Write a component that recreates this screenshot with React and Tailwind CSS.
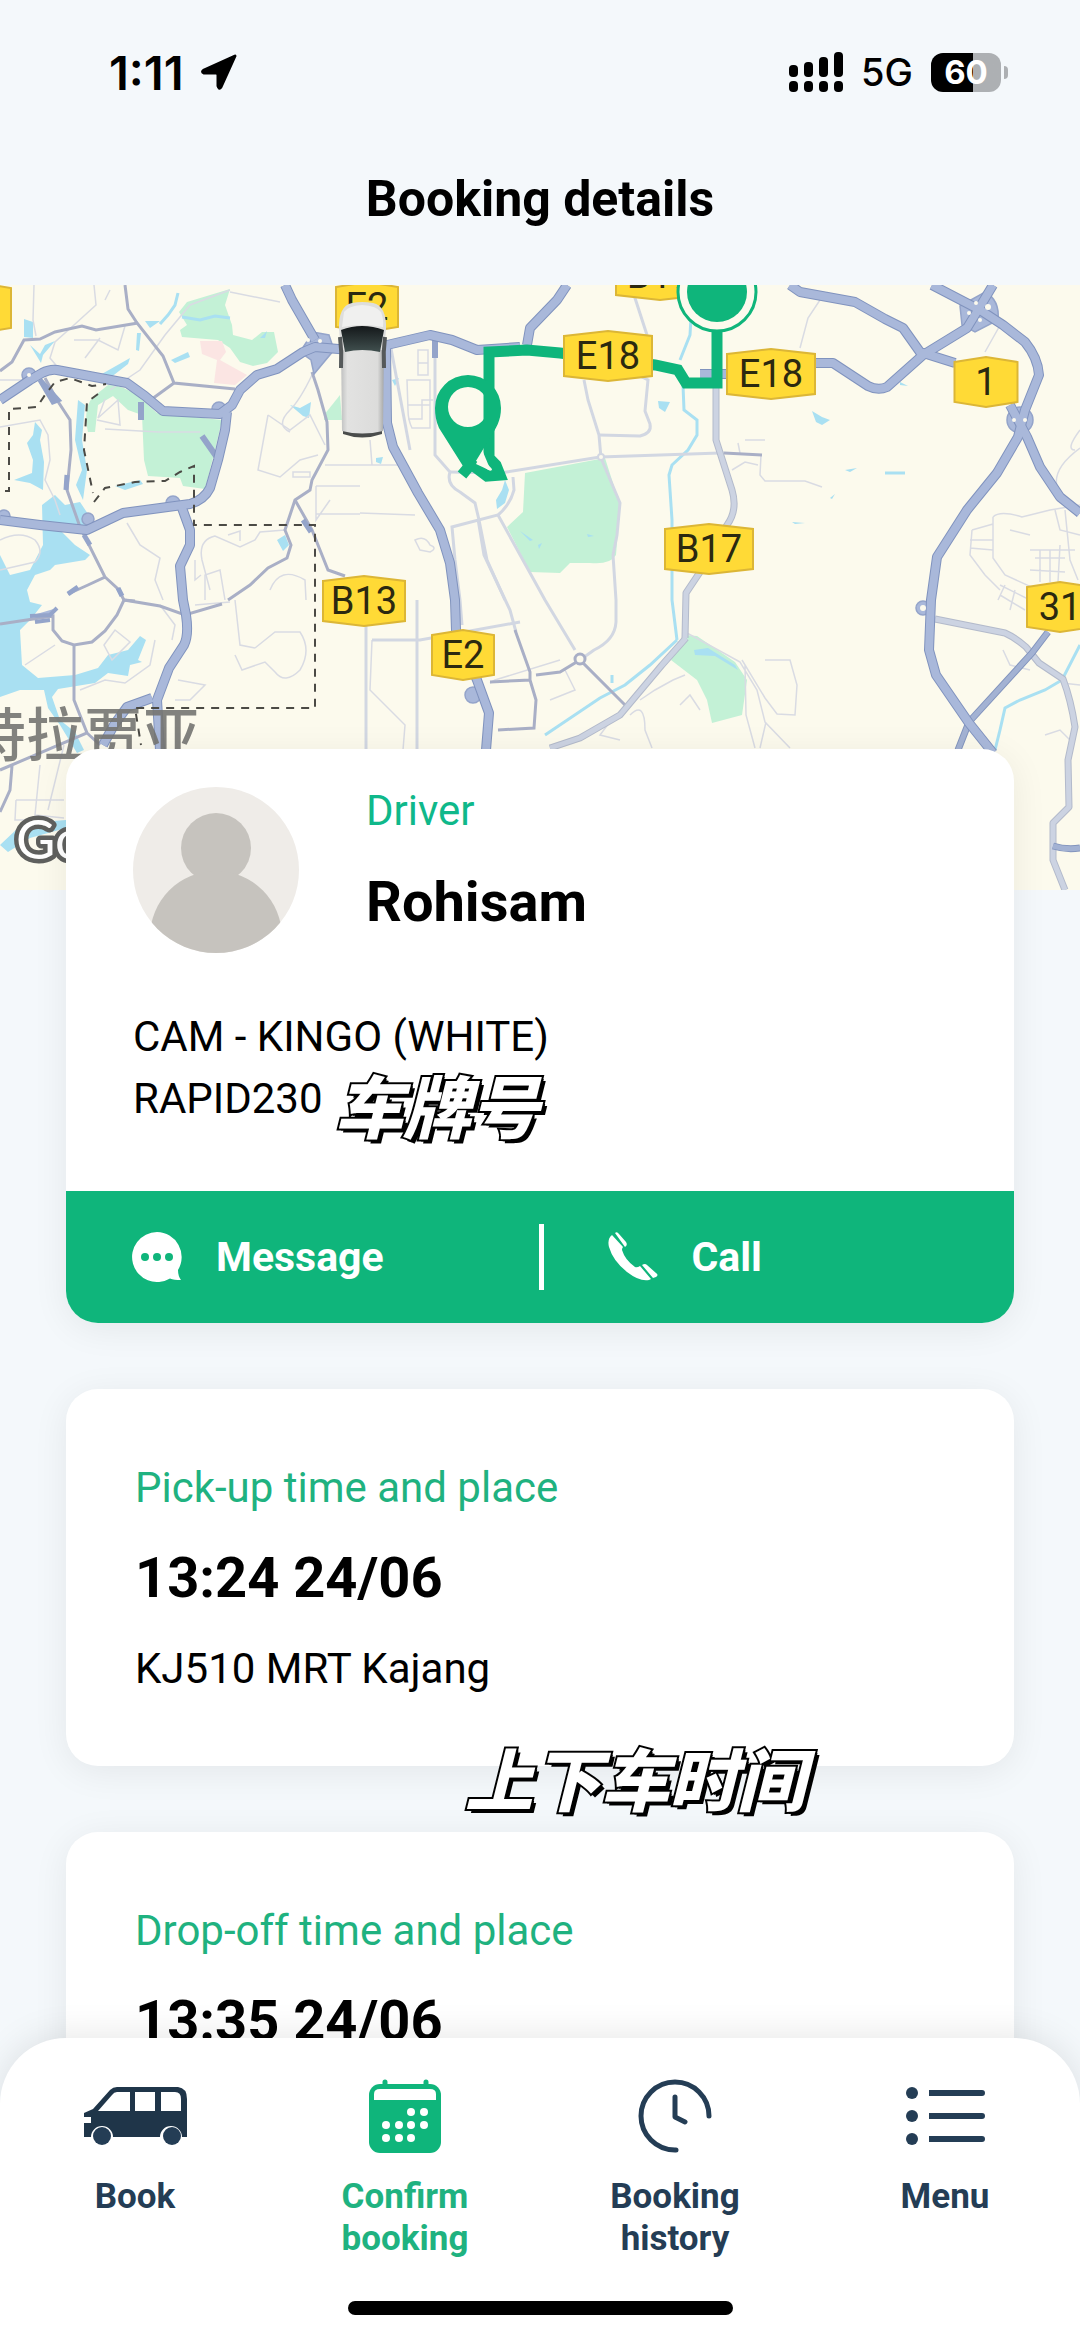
/**
 * Booking details screen - live map, driver card, trip times and tab bar
 */
import React, { memo } from 'react';

const majorRoads = [
  'M0 400L30 380L42 373Q50 369 57 370L127 383L145 396L163 411L220 414L232 405L240 390L257 375L277 369L303 352L315 347L350 350L387 345L430 335L452 340L477 350L520 347',
  'M227 412L225 430L218 460L210 488Q204 500 190 504L123 513L87 530L40 525L0 520',
  'M182 508L190 530L190 545L180 566L183 600L186 615Q189 635 184 645L169 668L157 700L160 750',
  'M152 698L127 707L114 725L103 745',
  'M285 285L292 300L315 340',
  'M386 347L387 423L393 447L418 493L440 530L450 563L455 600L456 630L477 680L489 713L486 750',
  'M567 285L557 300L530 328L527 345',
  'M790 285L800 292L855 302L885 319L903 328L920 352L955 363',
  'M812 363L833 363L868 386Q878 391 887 387L923 355L967 328L978 310L993 285',
  'M932 285L980 310L1003 325L1025 342Q1038 358 1039 375L1025 410L1018 437L997 473L967 510L937 557L931 600L929 650L936 675L969 723L993 753',
  'M1010 405L1027 437L1040 467L1060 497L1080 513',
  'M700 374L730 374',
];

const midRoads = [
  'M1048 632L1032 653L969 722L958 750',
  'M1080 848Q1066 850 1053 846',
];

const paleRoads = [
  'M935 619L1005 633Q1016 638 1026 647L1039 663L1063 679Q1071 700 1075 727L1068 760L1069 807L1053 823L1053 860L1065 890',
  'M716 330L716 440L732 490Q738 510 727 525L700 572L686 593L685 638',
  'M686 638L662 665L620 715L580 738L550 748',
];

const greyRoads = [
  'M125 285L128 309L137 323L163 356L174 383L235 389M174 383L152 399',
  'M0 371L12 362L24 340L40 339L55 332L82 326L96 330L138 323',
  'M45 378L57 400L70 420L71 450L67 490L80 527L105 577L88 585L68 594M105 577L118 589L124 600L135 601',
  'M0 624L53 616L53 630L62 641L74 645L92 642L105 631L117 615L124 600L160 606L185 615L222 604',
  'M74 645L74 700L87 733L0 770M12 766L10 790L0 812M87 733L100 745',
  'M312 372L318 390L327 422L328 450L312 480L310 490L295 500L285 530L291 545L287 558L268 568L250 585L228 600',
  'M295 500L312 530L320 550L328 570L345 576',
  'M435 335L435 358',
  'M515 630L530 672L530 680L490 682M530 680L536 700L534 728L498 730M536 675L560 672L580 660L625 705',
  'M724 453L762 455',
];

const lightRoads = [
  'M435 358L435 455L450 472Q446 485 460 492L475 503L479 520L487 560L505 600',
  'M450 472L500 473L600 457L720 453L724 453',
  'M584 380L588 400L599 435L601 458L620 503L617 535L613 555L616 600L616 622Q615 640 594 650L580 660',
  'M513 477L514 490Q510 505 498 515L452 527L455 560L460 600L462 625',
  'M498 515L545 600L575 650',
  'M478 519L484 555L510 610L516 632',
  'M599 435L640 436Q652 433 650 424L645 411L648 380L640 376M634 295L647 335',
  'M390 343L410 450',
  'M417 600L417 750M366 600L366 750M372 640L420 640L520 622',
];

const thinLines = [
  'M34 285L33 320L36 336M94 285L96 305L74 325L55 342L50 358L60 370M0 380L30 380M74 340L98 340L118 350L125 326M85 358L100 338',
  'M110 390L140 370L165 335L190 305L230 290M230 292L280 302M105 300L110 290',
  'M0 427L40 420L48 435L50 460L45 480L55 500L60 515M105 399L98 418L118 400L120 425L97 420M105 429L158 432L200 432',
  'M268 415L258 470L280 477L300 460L318 455M268 415L290 430L310 415L325 445M290 432Q275 425 290 410Q300 400 312 375',
  'M325 465L360 465M316 486L360 486M316 514L360 514M316 486L316 520L330 500M293 472L310 472L310 477L293 477z',
  'M202 560Q198 540 215 536L240 547L255 540L260 532L285 530M202 560L210 590M195 560L195 580L201 575M228 535L240 531L240 541',
  'M127 523L140 545L160 558L155 580L163 600M0 540Q20 530 35 540Q45 552 35 562L0 570M270 590Q280 565 305 580L306 600M205 600L205 575L220 570L225 600',
  'M407 380L430 380L430 428L412 428Q408 420 408 410zM408 405L430 405M418 350L428 350L428 375L418 375zM418 363L428 363M408 419L422 419L422 400L433 400',
  'M360 465L400 465M360 513L415 515M370 440L372 465M415 540Q425 535 430 545Q438 548 430 552L420 550z',
  'M235 600L240 645L255 648M255 648L275 632L300 632Q312 650 300 670Q285 685 275 672L265 662L242 670L235 655M195 605L230 602',
  'M80 690L105 680L125 683L150 665L155 640M104 645L115 630L130 642L112 660zM25 665L55 645M160 605L175 625L172 640M178 680L205 685L190 700L175 700',
  'M40 765L35 815L64 818M64 745L48 810M16 800L64 800M16 800L15 820L50 820',
  'M372 640L370 690L405 725L403 750M490 683L495 680L560 660',
  'M765 660L790 660L797 685L795 715L777 714L765 698L742 660M685 632Q700 640 740 662L757 690L765 722L790 748M745 665L746 715L755 748M766 722L760 748',
  'M640 700L655 690L673 680L685 675M680 705L690 695L700 710M630 715Q645 700 645 730L652 748M615 715L600 735L620 740M550 700L575 690L565 670',
  'M745 440L765 440M761 455L760 475L765 481L805 481L822 487M740 453L738 443M732 470L745 462L758 465M820 300L808 318L800 348',
  'M993 517Q1000 510 1022 517L1050 510L1080 505M993 517L993 558L1005 575L1060 600M972 530L993 524M970 540L993 540M970 548L993 550M972 530L970 555L985 575L1000 590',
  'M1030 550L1075 550M1035 558L1065 558M1030 570L1065 572M1040 550L1040 582M1050 550L1050 582M1060 545L1058 582M1000 585L1030 600M1000 595L1025 610M1005 585L998 600M1015 590L1010 610',
  'M1080 430Q1065 450 1075 450M1058 490Q1050 470 1080 448M1055 510L1060 530L1080 535M1065 510L1070 560L1078 580M1010 530L1030 535',
  'M1003 650L1010 665L1030 670M1045 735L1060 730L1072 742M1062 683L1080 685M1003 320L985 352',
];

const parks = [
  'M179 312L187 302L230 289L225 305L232 325L233 335L252 340L262 332L274 332L278 352L267 363L253 366L240 362L230 348L218 340L182 337L180 330L187 325z',
  'M88 432Q83 410 92 398L108 385Q125 385 140 398L157 413L222 420L215 450L205 489L183 486L180 478L148 476L144 460L142 415L128 410L113 396L98 405L95 432z',
  'M525 473L605 458L620 505L616 555Q610 565 590 563L570 563L560 573L530 572L507 527L523 512z',
  'M685 635L697 636L735 662L747 680L742 715L712 723L707 700L697 680L671 660z',
  'M324 415L340 395L342 420L324 420z',
];

const lakes = [
  'M24 319L33 322L33 338L24 337zM145 321L160 321L150 328zM137 333L141 333L139 351L136 350zM100 375L130 358L128 364L110 378z',
  'M30 345L40 354L45 345L55 341L43 355L41 363z',
  'M35 422L42 430L40 440L44 462L43 490L30 483L14 480L32 473L33 460L27 443L33 435z',
  'M78 400L85 405L82 440L87 470L83 500L76 485L82 470L75 440z',
  'M42 505L55 495L65 505L80 502L92 520L85 540L80 530L30 528L60 530L75 545L90 555L85 560L55 565L50 570L35 575L27 590L30 602L42 605L30 620L20 630L22 665L38 678L75 675L98 668L108 655L128 650L140 636L146 640L138 660L142 662L130 665L128 676L108 673L95 683L58 689L52 697L60 720L75 732L84 750L77 753L60 725L48 708L44 690L20 690L0 697L0 555L10 575L30 570L43 545z',
  'M115 486L140 480L143 484L125 490zM277 540L285 535L289 545L283 551zM290 405L300 408L311 402L309 418L303 416zM260 338L267 331L265 338z',
  'M171 360L188 352L190 357L175 363zM392 380L399 378L395 386zM376 458L383 457L381 464L376 462z',
  'M505 480L509 490L505 503L497 509L496 500L502 490zM658 401L670 402L665 412L659 408z',
  'M812 411L822 417L830 420L822 425L816 422zM900 382L908 386L900 385zM845 470L857 468L850 472zM830 498L835 494L832 499zM792 522L805 523L795 524z',
  'M694 650L708 648L735 665L738 670L715 656L695 655zM520 531L533 540L530 541zM587 534L594 536L588 537zM538 545L542 543L539 549z',
  'M0 845L18 828L40 822L66 820L66 828L30 838L8 852z',
];

const streams = [
  'M178 293L175 305L168 315L160 324M182 317L200 320L215 316L230 318',
  'M692 300L690 335L680 360M683 385L684 410L697 420L697 435L688 450L672 465L669 475L672 520L672 600L677 640',
  'M677 640L650 665L625 685L600 698L545 735M612 675L612 683',
  'M1080 645L1062 680L1045 690L1020 700L1005 708L1000 730L995 750M885 473L905 473',
];

const routeColor = '#0fb57b';

const shields = [
  { id: 'shield-20', label: '20', x: -21, y: 308, w: 64 },
  { id: 'shield-e2-north', label: 'E2', x: 367, y: 307, w: 62 },
  { id: 'shield-b17-north', label: 'B17', x: 660, y: 275, w: 88 },
  { id: 'shield-e18-west', label: 'E18', x: 608, y: 356, w: 88 },
  { id: 'shield-e18-east', label: 'E18', x: 771, y: 374, w: 88 },
  { id: 'shield-1', label: '1', x: 986, y: 382, w: 63 },
  { id: 'shield-b17', label: 'B17', x: 709, y: 549, w: 88 },
  { id: 'shield-b13', label: 'B13', x: 364, y: 601, w: 82 },
  { id: 'shield-31', label: '31', x: 1060, y: 607, w: 66 },
  { id: 'shield-e2', label: 'E2', x: 463, y: 655, w: 62 },
];

// Yellow road number plate
function Shield({ label, x, y, w }) {
  const r = w / 2;
  return (
    <g>
      <path
        d={`M${x - r} ${y - 20}L${x} ${y - 25}L${x + r} ${y - 20}V${y + 20}L${x} ${y + 25}L${x - r} ${y + 20}z`}
        fill="#ffda36"
        stroke="#dcb636"
        strokeWidth="2"
      />
      <text x={x} y={y + 13} textAnchor="middle" fontSize="38" fill="#2b2910">
        {label}
      </text>
    </g>
  );
}

function Roads({ paths, width, edge, fill }) {
  return (
    <g fill="none" strokeLinejoin="round">
      {paths.map((d) => (
        <path key={d} d={d} stroke={edge} strokeWidth={width} />
      ))}
      {paths.map((d) => (
        <path key={`fill-${d}`} d={d} stroke={fill} strokeWidth={width - 2} />
      ))}
    </g>
  );
}

// Live map with the vehicle, the pick-up pin and the route
const TripMap = memo(function TripMap() {
  return (
    <svg
      viewBox="0 285 1080 605"
      preserveAspectRatio="xMidYMid slice"
      className="block w-full bg-[#fcfaed] font-['Roboto','Noto_Sans_CJK_SC',sans-serif]"
      role="img"
      aria-label="Trip map"
    >
      <defs>
        <linearGradient id="van-body" x1="0" x2="1">
          <stop offset="0" stopColor="#bfc0c0" />
          <stop offset="0.15" stopColor="#e2e2e1" />
          <stop offset="0.85" stopColor="#dcdcdb" />
          <stop offset="1" stopColor="#a5a6a6" />
        </linearGradient>
        <linearGradient id="van-glass" x1="0" y1="0" x2="0" y2="1">
          <stop offset="0" stopColor="#14181a" />
          <stop offset="1" stopColor="#41504f" />
        </linearGradient>
      </defs>

      <g fill="#c3f1d6">{parks.map((d) => <path key={d} d={d} />)}</g>
      <path d="M200 341L222 341L226 352L220 360L247 375L235 385L214 383L217 360L202 354z" fill="#fbe5e3" />
      <g fill="#a9e0f2">{lakes.map((d) => <path key={d} d={d} />)}</g>
      <g fill="none" stroke="#a9e0f2" strokeWidth="3">{streams.map((d) => <path key={d} d={d} />)}</g>
      <g fill="none" stroke="#d9dbe3" strokeWidth="1.5">{thinLines.map((d) => <path key={d} d={d} />)}</g>
      <g fill="none" stroke="#d2d7e2" strokeWidth="3">{lightRoads.map((d) => <path key={d} d={d} />)}</g>
      <g fill="none" stroke="#a9afc6" strokeWidth="3">{greyRoads.map((d) => <path key={d} d={d} />)}</g>
      <Roads paths={paleRoads} width={7} edge="#b3bacb" fill="#ccd3e2" />
      <Roads paths={midRoads} width={7} edge="#8294bd" fill="#a3b2d3" />

      {/* Interchanges */}
      <g fill="#a9b8da" stroke="#94a4ca" strokeWidth="1.5">
        <path d="M300 352L313 332L329 335L334 350L314 374L311 360z" />
        <path d="M960 306L985 292Q1000 300 998 320L975 332L962 325z" />
        <circle cx="1020" cy="420" r="13" />
        <circle cx="29" cy="375" r="7" />
        <circle cx="219" cy="409" r="7" />
        <circle cx="173" cy="503" r="7" />
        <circle cx="88" cy="519" r="6" />
        <circle cx="4" cy="516" r="6" />
        <circle cx="923" cy="608" r="7" />
        <circle cx="473" cy="695" r="8" />
        <path d="M40 380L58 400L53 402z" strokeWidth="5" />
        <path d="M84 535L90 545" strokeWidth="5" />
        <path d="M141 402V420M202 436L216 456M435 338V358" strokeWidth="6" />
        <path d="M30 616L50 615L57 608M35 622L50 620" strokeWidth="4" />
        <path d="M67 475L66 490M68 594L78 587M118 588L122 596M303 520L311 532" strokeWidth="5" />
      </g>
      <Roads paths={majorRoads} width={10} edge="#8093be" fill="#a9b8da" />
      <g fill="#fcfaed">
        <circle cx="29" cy="375" r="2" />
        <circle cx="308" cy="340" r="2" />
        <circle cx="320" cy="341" r="2" />
        <circle cx="976" cy="303" r="2" />
        <circle cx="988" cy="307" r="3" />
        <circle cx="969" cy="313" r="2" />
        <circle cx="980" cy="320" r="2" />
        <circle cx="1014" cy="420" r="2" />
        <circle cx="1025" cy="420" r="2" />
        <circle cx="923" cy="608" r="3" />
        <circle cx="580" cy="659" r="5" stroke="#a9afc6" strokeWidth="3" />
        <circle cx="601" cy="457" r="3" stroke="#d2d7e2" strokeWidth="2" />
      </g>

      {/* District borders */}
      <g fill="none" stroke="#4b4a45" strokeWidth="2" strokeDasharray="8 7">
        <path d="M5 491L9 491L9 409L37 407L45 395L55 382L70 378L92 386L106 384" />
        <path d="M98 394L87 402L84 450L93 493M94 502L105 488L135 482L165 481L180 472L194 466V525H315V708H135L141 745" />
      </g>

      {/* Route */}
      <path
        d="M462 475L471 464L487 476L500 475L496 465L489 458V352L527 350L560 353L655 365L678 370L686 383H717V325"
        fill="none"
        stroke={routeColor}
        strokeWidth="11"
      />
      <path
        fillRule="evenodd"
        d="M435 408a33 33 0 0 1 66 0c0 13-5 20-11 30L468 474 439 428c-3-7-4-13-4-20zM468 387a20 20 0 1 0 0 40a20 20 0 1 0 0-40z"
        fill={routeColor}
      />
      <path d="M476 464L483 452L491 471z" fill="#fcfaed" />

      {shields.map((item) => <Shield key={item.id} {...item} />)}

      <circle cx="717" cy="292" r="39" fill="#fcfaed" stroke={routeColor} strokeWidth="3" />
      <circle cx="717" cy="292" r="30" fill={routeColor} />

      {/* Vehicle */}
      <g>
        <path d="M343 428L382 428L382 434Q362 441 343 434z" fill="#4a4c4b" />
        <path d="M341 345L384 345L383 431Q362 436 342 431z" fill="url(#van-body)" />
        <path d="M339 330Q338 306 352 303Q362 301 373 303Q387 306 386 330L384 350L341 350z" fill="#dededd" />
        <path d="M344 312Q348 306 362 305Q377 306 381 312Q384 320 383 327Q362 323 342 327z" fill="#f0f0ef" />
        <path d="M341 330Q362 322 384 330L380 352Q362 348 345 352z" fill="url(#van-glass)" />
        <path d="M340 337Q342 352 341 368M385 337Q383 352 384 368" fill="none" stroke="#55595a" strokeWidth="4" />
      </g>

      <text x="-32" y="756" fontSize="58" fontWeight="500" fill="#747471" fillOpacity="0.9">特拉贾亚</text>
      <text
        x="16"
        y="859"
        fontSize="54"
        fill="#ffffff"
        stroke="#5f605e"
        strokeWidth="9"
        strokeLinejoin="round"
        className="font-['Lato',sans-serif] [paint-order:stroke]"
      >
        Google
      </text>
    </svg>
  );
});

function StatusBar() {
  return (
    <div className="flex h-24 items-center justify-between pt-12 pl-[109px] pr-[72px] font-['Inter',sans-serif]">
      <div className="flex items-center gap-4">
        <span className="text-[47px] leading-none font-semibold">1:11</span>
        <svg width="38" height="38" viewBox="0 0 38 38" aria-hidden="true">
          <path d="M35 3L21 34Q19 37 18 33V22Q18 20 16 20H4Q1 19 4 17z" fill="#000" stroke="#000" strokeWidth="3" strokeLinejoin="round" />
        </svg>
      </div>
      <div className="flex items-center gap-[18px]">
        <svg width="54" height="40" viewBox="0 0 54 40" aria-hidden="true">
          <g fill="#000">
            <rect x="0" y="13" width="9" height="12" rx="4" />
            <rect x="15" y="10" width="9" height="15" rx="4" />
            <rect x="30" y="5" width="9" height="20" rx="4" />
            <rect x="45" y="0" width="9" height="25" rx="4" />
            <rect x="0" y="29" width="9" height="11" rx="4" />
            <rect x="15" y="29" width="9" height="11" rx="4" />
            <rect x="30" y="29" width="9" height="11" rx="4" />
            <rect x="45" y="29" width="9" height="11" rx="4" />
          </g>
        </svg>
        <span className="text-[38px] leading-none font-medium">5G</span>
        <div className="flex items-center gap-[3px]">
          <div className="flex h-[39px] w-[70px] items-center justify-center rounded-xl bg-linear-to-r from-black from-60% to-[#adb0b3] to-60% text-[33px] leading-none font-bold text-white">
            60
          </div>
          <div className="h-[13px] w-1 rounded-r-full bg-[#adb0b3]" />
        </div>
      </div>
    </div>
  );
}

function DriverCard() {
  return (
    <section className="rounded-[32px] bg-white shadow-[0_6px_36px_rgba(0,0,0,0.07)]">
      <div className="px-[67px] pt-[38px] pb-[61px]">
        <div className="flex items-start gap-[67px]">
          <svg width="166" height="166" viewBox="0 0 166 166" aria-hidden="true">
            <clipPath id="avatar-clip">
              <circle cx="83" cy="83" r="83" />
            </clipPath>
            <g clipPath="url(#avatar-clip)">
              <rect width="166" height="166" fill="#efece8" />
              <circle cx="83" cy="61" r="35" fill="#c6c3be" />
              <circle cx="83" cy="150" r="66" fill="#c6c3be" />
            </g>
          </svg>
          <div>
            <p className="text-[42px] leading-[48px] text-[#0fb88a]">Driver</p>
            <h2 className="mt-[35px] text-[56px] leading-[64px] font-bold">Rohisam</h2>
          </div>
        </div>
        <div className="mt-[53px] text-[42px] leading-[62px]">
          <p>CAM - KINGO (WHITE)</p>
          <p className="relative">
            RAPID230
            <Caption className="top-[-4px] left-[202px]">车牌号</Caption>
          </p>
        </div>
      </div>
      <div className="flex items-center rounded-b-[32px] bg-[#0fb57b] py-[33px] text-[41px] leading-[48px] font-bold text-white">
        <button type="button" className="flex flex-1 items-center gap-[34px] pl-[66px]">
          <svg width="50" height="50" viewBox="0 0 50 50" aria-hidden="true">
            <path d="M25 0a25 25 0 1 0 13 46.400Q42 48 49 48Q46 44 46 38A25 25 0 0 0 25 0z" fill="#fff" />
            <g fill="#0fb57b">
              <circle cx="13" cy="25" r="4" />
              <circle cx="25" cy="25" r="4" />
              <circle cx="37" cy="25" r="4" />
            </g>
          </svg>
          Message
        </button>
        <div className="h-[66px] w-[5px] bg-white" />
        <button type="button" className="flex flex-1 items-center gap-[34px] pl-[64px]">
          <svg width="50" height="50" viewBox="0 0 50 50" aria-hidden="true">
            <g fill="#fff">
              <path d="M4 3Q-1 7 1 15Q5 29 19 40Q32 50 41 48L43 47L32 34Q29 36 27 35Q17 28 14 18Q14 16 15 15z" />
              <path d="M7 1Q9-1 11 2L18 10Q20 13 17 15z" />
              <path d="M34 33Q37 31 39 33L48 41Q51 43 48 45L45 46z" />
            </g>
          </svg>
          Call
        </button>
      </div>
    </section>
  );
}

// Outlined note written over the page
function Caption({ className, children }) {
  return (
    <span
      className={`absolute z-10 font-['Noto_Sans_CJK_SC',sans-serif] text-[68px] leading-[80px] font-black whitespace-nowrap text-white italic [-webkit-text-stroke:4px_#000] [paint-order:stroke] [text-shadow:2px_2px_0_#000,4px_4px_0_#000] ${className}`}
    >
      {children}
    </span>
  );
}

function StopCard({ title, time, place, children }) {
  return (
    <section className="relative rounded-[32px] bg-white px-[69px] pt-[75px] pb-[73px] shadow-[0_6px_36px_rgba(0,0,0,0.07)]">
      <h3 className="text-[42px] leading-[48px] text-[#1fb280]">{title}</h3>
      <p className="mt-[34px] text-[56px] leading-[64px] font-bold">{time}</p>
      {place && <p className="mt-[35px] text-[42px] leading-[48px]">{place}</p>}
      {children}
    </section>
  );
}

function VanIcon() {
  return (
    <svg width="103" height="58" viewBox="0 0 103 58" aria-hidden="true">
      <path
        fillRule="evenodd"
        d="M0 50V36H7V30H0V26L9 22L26 3Q29 0 33 0H94Q103 1 103 12V50H98A11 11 0 0 0 76 50H29A11 11 0 0 0 7 50zM14 24H46V5H33Q30 5 28 8zM51 24H71V5H51zM77 24H97V12Q97 5 91 5H77z"
        fill="#1f3549"
      />
      <circle cx="18" cy="49" r="9" fill="#243d55" />
      <circle cx="88" cy="49" r="9" fill="#243d55" />
    </svg>
  );
}

function CalendarIcon() {
  return (
    <svg width="74" height="74" viewBox="0 0 74 74" aria-hidden="true">
      <path d="M17 3V8M58 3V8" stroke="#0fb57b" strokeWidth="5" strokeLinecap="round" />
      <rect x="1" y="5" width="72" height="69" rx="11" fill="#0fb57b" />
      <path d="M6 21V15Q6 10 12 10H62Q68 10 68 15V21z" fill="#fff" />
      <g fill="#fff">
        <circle cx="43" cy="33" r="4" />
        <circle cx="56" cy="33" r="4" />
        <circle cx="18" cy="46" r="4" />
        <circle cx="31" cy="46" r="4" />
        <circle cx="43" cy="46" r="4" />
        <circle cx="56" cy="46" r="4" />
        <circle cx="18" cy="59" r="4" />
        <circle cx="31" cy="59" r="4" />
        <circle cx="43" cy="59" r="4" />
      </g>
    </svg>
  );
}

function HistoryIcon() {
  return (
    <svg width="74" height="74" viewBox="0 0 74 74" fill="none" stroke="#243d55" strokeWidth="5" strokeLinecap="round" strokeLinejoin="round" aria-hidden="true">
      <path d="M71 37A34 34 0 1 0 37 71H38" />
      <path d="M37 18V38L47 43" />
    </svg>
  );
}

function MenuIcon() {
  return (
    <svg width="79" height="58" viewBox="0 0 79 58" aria-hidden="true">
      <g fill="#243d55">
        <circle cx="6" cy="6" r="6" />
        <circle cx="6" cy="29" r="6" />
        <circle cx="6" cy="52" r="6" />
        <path d="M23 3H76a3 3 0 0 1 0 6H23zM23 26H76a3 3 0 0 1 0 6H23zM23 49H76a3 3 0 0 1 0 6H23z" />
      </g>
    </svg>
  );
}

const tabs = [
  { id: 'tab-book', label: 'Book', icon: <VanIcon /> },
  { id: 'tab-confirm', label: 'Confirm booking', icon: <CalendarIcon />, active: true },
  { id: 'tab-history', label: 'Booking history', icon: <HistoryIcon /> },
  { id: 'tab-menu', label: 'Menu', icon: <MenuIcon /> },
];

function TabBar() {
  return (
    <nav className="relative z-20 rounded-t-[66px] bg-white pt-[41px] pb-[22px] shadow-[0_-2px_36px_rgba(0,0,0,0.1)]">
      <div className="grid grid-cols-4">
        {tabs.map((tab) => (
          <a
            key={tab.id}
            href={`#${tab.id}`}
            aria-current={tab.active ? 'page' : undefined}
            className={`flex flex-col items-center gap-[23px] text-center text-[35px] leading-[42px] font-bold ${
              tab.active ? 'text-[#1fb280]' : 'text-[#243d55]'
            }`}
          >
            <span className="flex h-[74px] items-center">{tab.icon}</span>
            <span className="max-w-[160px]">{tab.label}</span>
          </a>
        ))}
      </div>
      <div className="mx-auto mt-[41px] h-[14px] w-[385px] rounded-full bg-black" />
    </nav>
  );
}

export default function App() {
  return (
    <div className="flex h-screen flex-col bg-[#f4f8fb] font-['Roboto',sans-serif] text-black">
      <div className="-mb-[66px] min-h-0 flex-1 overflow-y-auto [scrollbar-width:none]">
        <header>
          <StatusBar />
          <h1 className="pt-[73px] pb-14 text-center text-[50px] leading-[60px] font-bold">Booking details</h1>
        </header>
        <TripMap />
        <main className="relative mx-[66px] -mt-[141px] flex flex-col gap-[66px] pb-[132px]">
          <DriverCard />
          <StopCard title="Pick-up time and place" time="13:24 24/06" place="KJ510 MRT Kajang">
            <Caption className="bottom-[-51px] left-[399px]">上下车时间</Caption>
          </StopCard>
          <StopCard title="Drop-off time and place" time="13:35 24/06" />
        </main>
      </div>
      <TabBar />
    </div>
  );
}
